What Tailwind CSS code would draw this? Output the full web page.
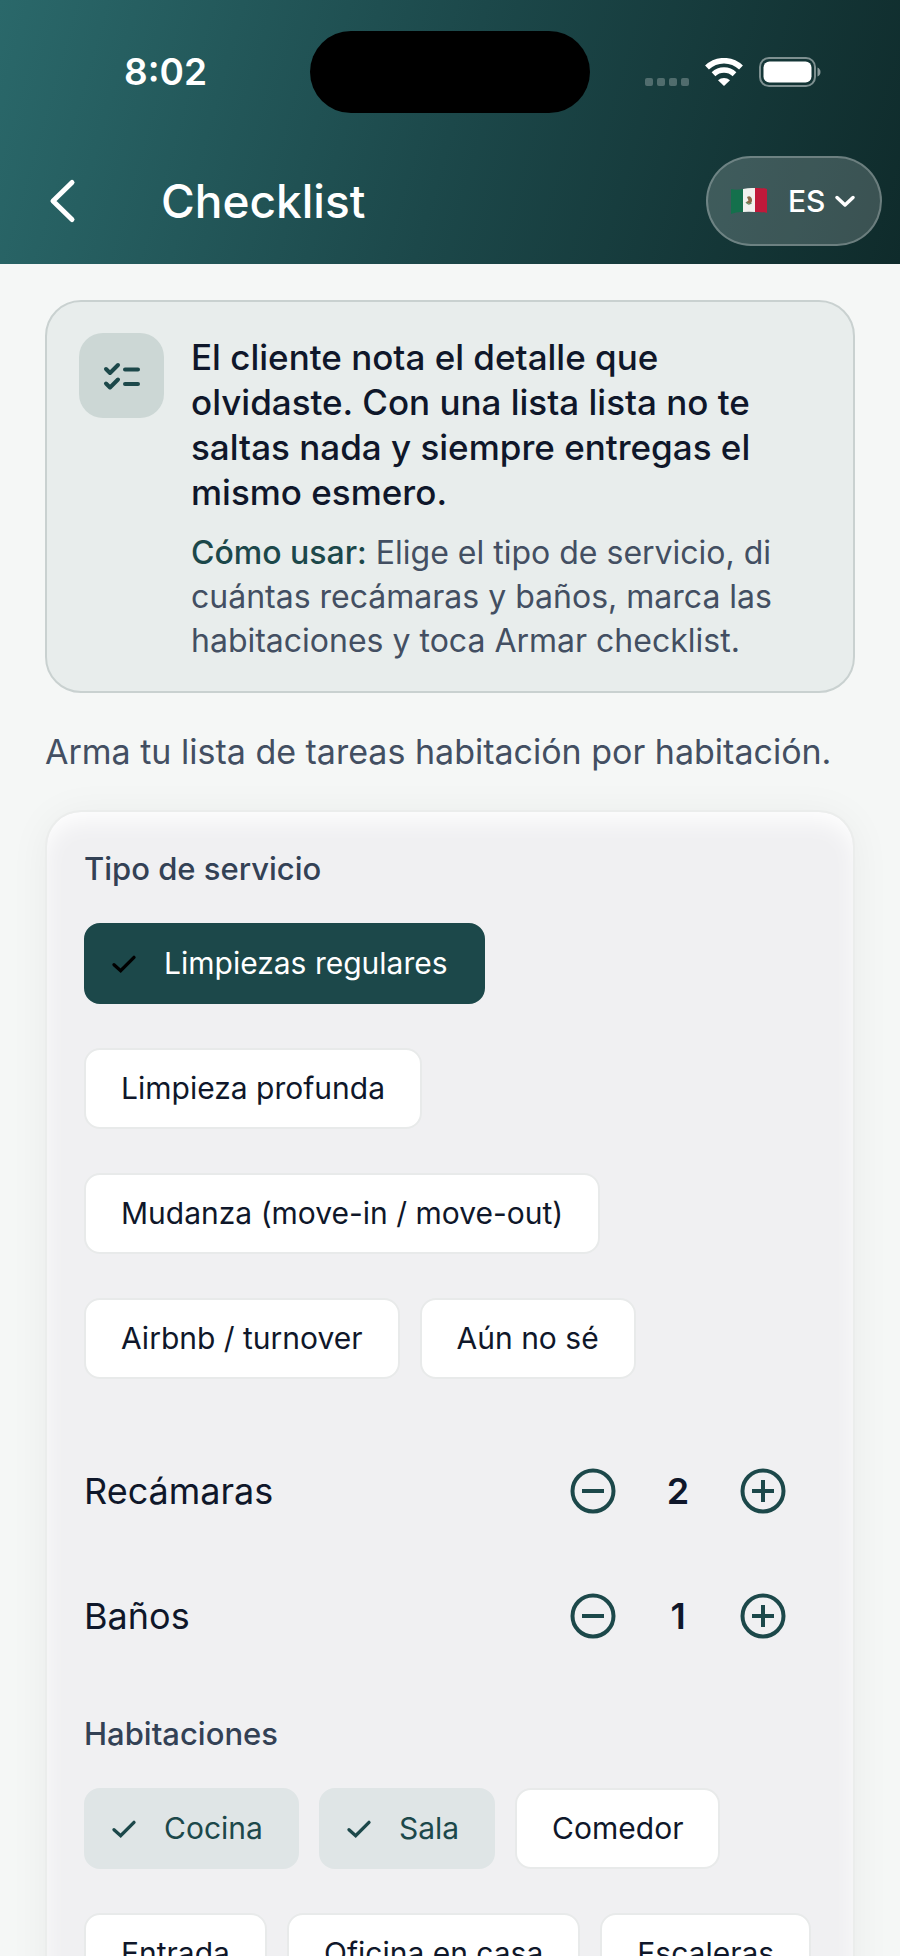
<!DOCTYPE html>
<html lang="es">
<head>
    <meta charset="UTF-8">
    <meta name="viewport" content="width=device-width, initial-scale=1">
    <title>Checklist</title>
    <script src="https://cdn.jsdelivr.net/npm/@tailwindcss/browser@4"></script>
</head>
<body class="flex h-screen flex-col overflow-hidden bg-[#f5f7f6] font-['Inter','Liberation_Sans',sans-serif] text-[#0f172a] [font-optical-sizing:none]">

    <header class="shrink-0 bg-[linear-gradient(106deg,#2a686a,#1c484a_50%,#0f2b2b)] text-white">
        <!-- Status bar -->
        <div class="grid grid-cols-[1fr_280px_1fr] items-center pt-[31px]">
            <span class="pl-[124px] text-[37px] leading-[44px] font-semibold">8:02</span>
            <div class="h-[82px] rounded-full bg-black"></div>
            <div class="flex items-center justify-end pr-[79px]">
                <svg class="mt-5 mr-4 h-2 w-11" viewBox="0 0 44 8" fill="#fff" fill-opacity=".25">
                    <rect width="8" height="8" rx="2"/>
                    <rect x="12" width="8" height="8" rx="2"/>
                    <rect x="24" width="8" height="8" rx="2"/>
                    <rect x="36" width="8" height="8" rx="2"/>
                </svg>
                <svg class="mr-4 h-7 w-[38px]" viewBox="0 0 38 28" fill="none" stroke="#fff" stroke-width="5.5">
                    <path d="M2 9.5a24.5 24.5 0 0 1 34 0"/>
                    <path d="M8.5 16.2a15.5 15.5 0 0 1 21 0"/>
                    <path d="M13 22.3a9 9 0 0 1 12 0L19 28z" fill="#fff" stroke="none"/>
                </svg>
                <svg class="h-[30px] w-[62px]" viewBox="0 0 62 30" fill="none">
                    <rect x="1" y="1" width="55" height="28" rx="9" stroke="#fff" stroke-opacity=".45" stroke-width="2"/>
                    <rect x="4.5" y="4.5" width="48" height="21" rx="6" fill="#fff"/>
                    <path d="M58.5 10.5q3 1.5 3 4.5t-3 4.5z" fill="#fff" fill-opacity=".5"/>
                </svg>
            </div>
        </div>

        <!-- App bar -->
        <div class="flex items-center pt-[43px] pr-[18px] pb-[18px] pl-[40px]">
            <button type="button" aria-label="Atrás" class="flex size-12 items-center justify-center">
                <svg class="size-12" viewBox="0 0 48 48" fill="none" stroke="#fff" stroke-width="5" stroke-linecap="round" stroke-linejoin="round">
                    <path d="M32 5.5 13 24l19 18.5"/>
                </svg>
            </button>
            <h1 class="ml-[73px] flex-1 text-[46px] leading-[56px] font-medium">Checklist</h1>
            <button type="button" class="flex h-[90px] w-[176px] items-center rounded-full border-2 border-white/25 bg-white/18 pl-[22px]">
                <svg class="h-7 w-[38px]" viewBox="0 0 38 28">
                    <path d="M1 2q6 1.5 12 0v23q-6-.5-12 2z" fill="#14704c"/>
                    <path d="M13 2q6-1.500 12-1v24q-6-.5-12 0z" fill="#f1f1ee"/>
                    <path d="M25 1q6-.5 12 1v24q-6-1.500-12-1z" fill="#c1193a"/>
                    <path d="M17 10q3-2 4.500 1t-1 5.500q-3 1-4-1.500l2-1.500z" fill="#8a6a48"/>
                    <path d="M16 15q2 3.500 5.500 1" fill="none" stroke="#5d8a5f" stroke-width="1.2"/>
                </svg>
                <span class="ml-5 text-[30px] leading-10 font-medium">ES</span>
                <svg class="ml-2 size-6" viewBox="0 0 24 24" fill="none" stroke="#fff" stroke-width="3.5" stroke-linecap="round" stroke-linejoin="round">
                    <path d="M4 8.5 12 16l8-7.5"/>
                </svg>
            </button>
        </div>
    </header>

    <main class="flex min-h-0 flex-1 flex-col px-[45px] pt-9">
        <!-- Intro -->
        <section class="flex shrink-0 gap-[27px] rounded-[36px] border-2 border-[#c9d1d0] bg-[#e8edec] px-8 pt-[31px] pb-[28px]">
            <div class="flex size-[85px] shrink-0 items-center justify-center rounded-3xl bg-[#ccd7d5]">
                <svg class="h-[30px] w-10" viewBox="0 0 40 30" fill="none" stroke="#1c484a" stroke-width="4" stroke-linecap="round" stroke-linejoin="round">
                    <path d="M4 8l4 4 8-8M4 22.5l4 4 8-8M23 8.5h13M23 23h13"/>
                </svg>
            </div>
            <div class="flex-1 pt-0.5">
                <p class="text-[35px] leading-[45px] font-medium">El cliente nota el detalle que olvidaste. Con una lista lista no te saltas nada y siempre entregas el mismo esmero.</p>
                <p class="mt-4 text-[32px] leading-[44px] text-[#434f62]"><strong class="font-medium text-[#1c484a]">Cómo usar:</strong> Elige el tipo de servicio, di cuántas recámaras y baños, marca las habitaciones y toca Armar checklist.</p>
            </div>
        </section>

        <p class="mt-9 shrink-0 text-[34px] leading-[45px] text-[#434f62]">Arma tu lista de tareas habitación por habitación.</p>

        <!-- Form -->
        <form class="mt-9 flex-1 rounded-t-[36px] border-2 border-b-0 border-[#ebedec] bg-[#f0f0f2] px-[37px] pt-[35px] shadow-[0_4px_40px_rgba(0,0,0,0.05),inset_0_12px_24px_-4px_#ffffff]">
            <fieldset>
                <legend class="text-[31px] leading-[44px] font-medium text-[#334155]">Tipo de servicio</legend>
                <div class="mt-8 flex flex-wrap gap-x-5 gap-y-[44px] text-[30px]">
                    <label class="flex h-[81px] items-center gap-6 rounded-2xl border-2 border-[#e8eaea] bg-white px-[35px] has-checked:border-[#1c484a] has-checked:bg-[#1c484a] has-checked:pl-[22px] has-checked:text-white">
                        <input type="radio" name="servicio" checked class="peer sr-only">
                        <svg class="hidden size-8 peer-checked:block" viewBox="0 0 24 24" fill="none" stroke="#000" stroke-width="2.5" stroke-linecap="round"><path d="M4.5 12.5 9.5 17l10-10"/></svg>
                        Limpiezas regulares
                    </label>
                    <label class="flex h-[81px] items-center rounded-2xl border-2 border-[#e8eaea] bg-white px-[35px]">
                        <input type="radio" name="servicio" class="sr-only">Limpieza profunda
                    </label>
                    <label class="flex h-[81px] items-center rounded-2xl border-2 border-[#e8eaea] bg-white px-[35px]">
                        <input type="radio" name="servicio" class="sr-only">Mudanza (move-in / move-out)
                    </label>
                    <label class="flex h-[81px] items-center rounded-2xl border-2 border-[#e8eaea] bg-white px-[35px]">
                        <input type="radio" name="servicio" class="sr-only">Airbnb / turnover
                    </label>
                    <label class="flex h-[81px] items-center rounded-2xl border-2 border-[#e8eaea] bg-white px-[35px]">
                        <input type="radio" name="servicio" class="sr-only">Aún no sé
                    </label>
                </div>
            </fieldset>

            <div class="mt-[49px] flex h-[125px] items-center pr-7">
                <span class="flex-1 text-[36px]">Recámaras</span>
                <button type="button" aria-label="Menos recámaras">
                    <svg class="size-[50px]" viewBox="0 0 50 50" fill="none" stroke="#1c484a" stroke-width="4"><circle cx="25" cy="25" r="20.5"/><path d="M14 25h22"/></svg>
                </button>
                <output class="w-[120px] text-center text-[36px] font-semibold">2</output>
                <button type="button" aria-label="Más recámaras">
                    <svg class="size-[50px]" viewBox="0 0 50 50" fill="none" stroke="#1c484a" stroke-width="4"><circle cx="25" cy="25" r="20.5"/><path d="M14 25h22M25 14v22"/></svg>
                </button>
            </div>
            <div class="flex h-[125px] items-center pr-7">
                <span class="flex-1 text-[36px]">Baños</span>
                <button type="button" aria-label="Menos baños">
                    <svg class="size-[50px]" viewBox="0 0 50 50" fill="none" stroke="#1c484a" stroke-width="4"><circle cx="25" cy="25" r="20.5"/><path d="M14 25h22"/></svg>
                </button>
                <output class="w-[120px] text-center text-[36px] font-semibold">1</output>
                <button type="button" aria-label="Más baños">
                    <svg class="size-[50px]" viewBox="0 0 50 50" fill="none" stroke="#1c484a" stroke-width="4"><circle cx="25" cy="25" r="20.5"/><path d="M14 25h22M25 14v22"/></svg>
                </button>
            </div>

            <fieldset class="mt-[34px]">
                <legend class="text-[31px] leading-[44px] font-medium text-[#334155]">Habitaciones</legend>
                <div class="mt-8 flex flex-wrap gap-x-5 gap-y-[44px] text-[30px]">
                    <label class="flex h-[81px] items-center gap-6 rounded-2xl border-2 border-[#e8eaea] bg-white px-[35px] has-checked:border-[#dfe5e6] has-checked:bg-[#dfe5e6] has-checked:px-[22px] has-checked:pr-[34px] has-checked:text-[#1c484a]">
                        <input type="checkbox" checked class="peer sr-only">
                        <svg class="hidden size-8 peer-checked:block" viewBox="0 0 24 24" fill="none" stroke="#1c484a" stroke-width="2.5" stroke-linecap="round"><path d="M4.5 12.5 9.5 17l10-10"/></svg>
                        Cocina
                    </label>
                    <label class="flex h-[81px] items-center gap-6 rounded-2xl border-2 border-[#e8eaea] bg-white px-[35px] has-checked:border-[#dfe5e6] has-checked:bg-[#dfe5e6] has-checked:px-[22px] has-checked:pr-[34px] has-checked:text-[#1c484a]">
                        <input type="checkbox" checked class="peer sr-only">
                        <svg class="hidden size-8 peer-checked:block" viewBox="0 0 24 24" fill="none" stroke="#1c484a" stroke-width="2.5" stroke-linecap="round"><path d="M4.5 12.5 9.5 17l10-10"/></svg>
                        Sala
                    </label>
                    <label class="flex h-[81px] items-center rounded-2xl border-2 border-[#e8eaea] bg-white px-[35px]">
                        <input type="checkbox" class="sr-only">Comedor
                    </label>
                    <label class="flex h-[81px] items-center rounded-2xl border-2 border-[#e8eaea] bg-white px-[35px]">
                        <input type="checkbox" class="sr-only">Entrada
                    </label>
                    <label class="flex h-[81px] items-center rounded-2xl border-2 border-[#e8eaea] bg-white px-[35px]">
                        <input type="checkbox" class="sr-only">Oficina en casa
                    </label>
                    <label class="flex h-[81px] items-center rounded-2xl border-2 border-[#e8eaea] bg-white px-[35px]">
                        <input type="checkbox" class="sr-only">Escaleras
                    </label>
                </div>
            </fieldset>
        </form>
    </main>

</body>
</html>
